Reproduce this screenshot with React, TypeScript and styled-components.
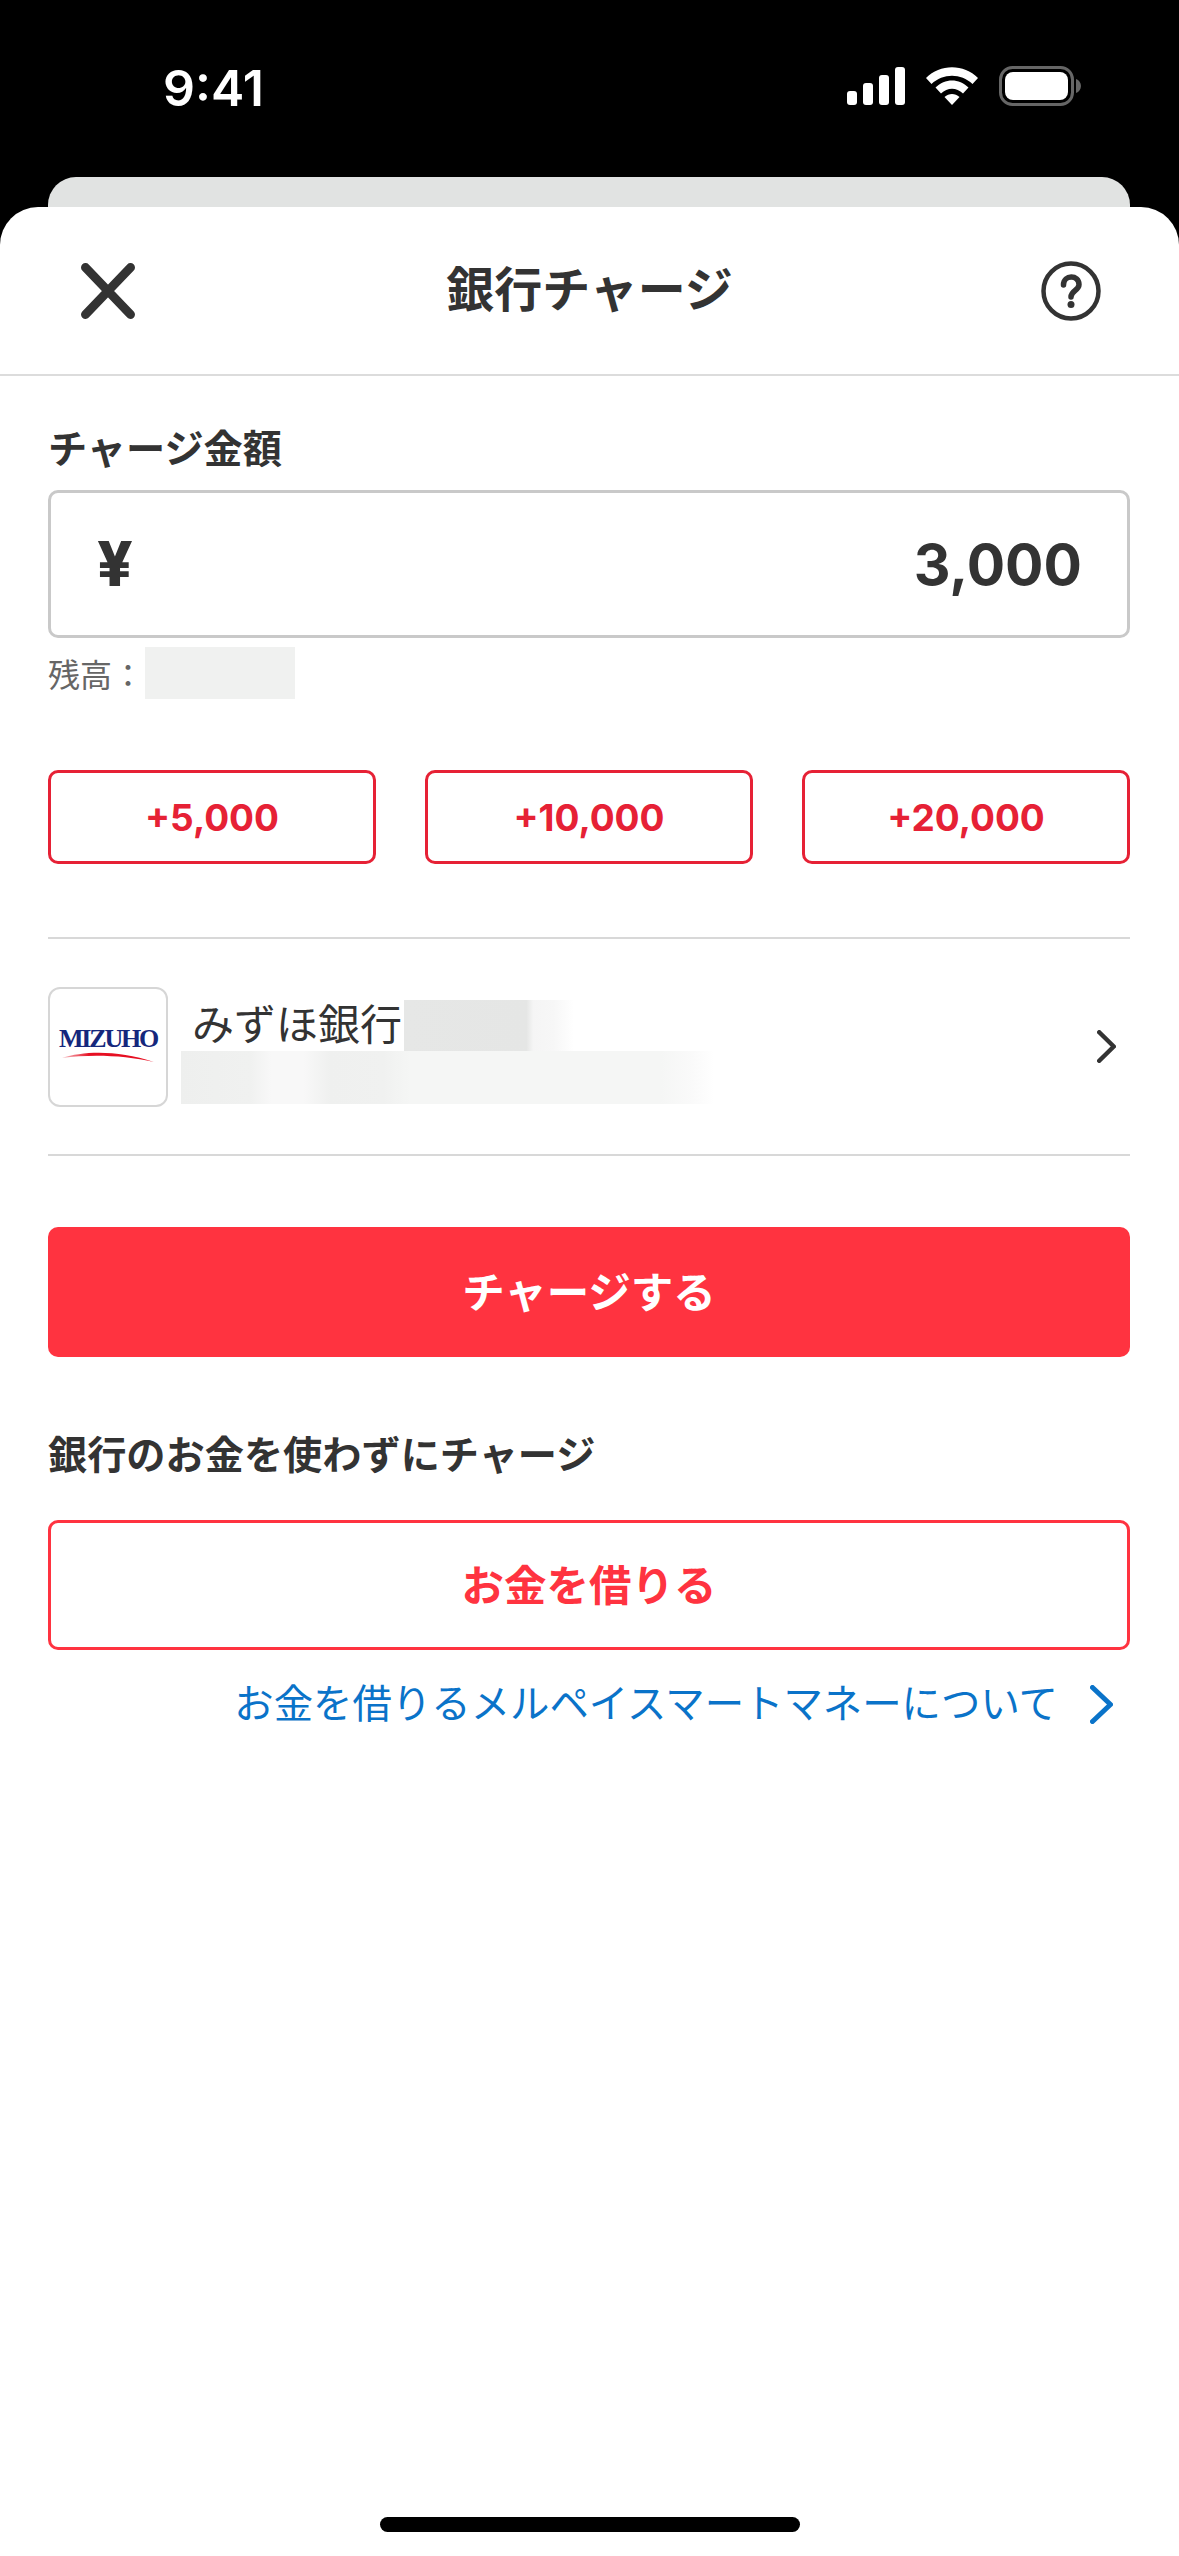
import React from "react";
import styled, { createGlobalStyle } from "styled-components";

const Global = createGlobalStyle`
  html, body { margin: 0; padding: 0; background: #000; }
  body { font-family: "Liberation Sans", "Noto Sans CJK JP", sans-serif; }
  * { box-sizing: border-box; }
`;

const Screen = styled.div`
  width: 1179px;
  height: 2556px;
  background: #000;
  display: flex;
  flex-direction: column;
  overflow: hidden;
`;

const StatusBar = styled.div`
  height: 177px;
  flex: none;
  display: flex;
  align-items: flex-start;
  justify-content: space-between;
  padding: 60px 98px 0 163px;
`;

const Time = styled.span`
  font-family: Inter, "Liberation Sans", sans-serif;
  font-size: 50px;
  line-height: 56px;
  font-weight: 600;
  color: #fff;
`;

const StatusIcons = styled.div`
  display: flex;
  align-items: center;
  gap: 21px;
  padding-top: 6px;
`;

const BackCard = styled.div`
  height: 30px;
  flex: none;
  margin: 0 49px 0 48px;
  background: #e1e3e2;
  border-radius: 28px 28px 0 0;
`;

const Sheet = styled.div`
  flex: 1;
  background: #fff;
  border-radius: 38px 38px 0 0;
  display: flex;
  flex-direction: column;
  position: relative;
`;

const Header = styled.header`
  height: 169px;
  flex: none;
  display: grid;
  grid-template-columns: 160px 1fr 160px;
  align-items: center;
  border-bottom: 2px solid #dcdcdc;
  color: #333;
`;

const Title = styled.h1`
  margin: 0;
  text-align: center;
  font-size: 48px;
  font-weight: 700;
  line-height: 60px;
  color: #333;
`;

const CloseBox = styled.div`
  padding-left: 81px;
  display: flex;
`;

const HelpBox = styled.div`
  display: flex;
  justify-content: flex-end;
  padding-right: 78px;
`;

const Content = styled.main`
  padding: 0 49px 0 48px;
  display: flex;
  flex-direction: column;
`;

const SectionLabel = styled.h2<{ $top: number }>`
  margin: ${(p) => p.$top}px 0 0;
  font-size: 39.200px;
  line-height: 46px;
  font-weight: 700;
  color: #333;
`;

const AmountBox = styled.div`
  margin-top: 17px;
  height: 148px;
  border: 3px solid #c9c9c9;
  border-radius: 10px;
  display: flex;
  align-items: center;
  justify-content: space-between;
  padding: 0 45px 0 46px;
  color: #333;
  font-family: Inter, "Liberation Sans", sans-serif;
  font-weight: 700;
`;

const Yen = styled.span`
  font-size: 62px;
  font-weight: 800;
  line-height: 1;
`;

const Amount = styled.span`
  font-size: 57px;
  line-height: 1;
`;

const BalanceRow = styled.div`
  margin-top: 9px;
  display: flex;
  align-items: center;
  height: 52px;
`;

const BalanceLabel = styled.span`
  font-size: 32px;
  color: #666;
  width: 97px;
`;

const Redaction = styled.div<{ $w: number; $h: number; $bg: string }>`
  width: ${(p) => p.$w}px;
  height: ${(p) => p.$h}px;
  flex: none;
  background: ${(p) => p.$bg};
`;

const QuickRow = styled.div`
  margin-top: 71px;
  display: grid;
  grid-template-columns: repeat(3, 328px);
  justify-content: space-between;
`;

const QuickButton = styled.button`
  height: 94px;
  background: #fff;
  border: 3px solid #e62135;
  border-radius: 10px;
  color: #e62135;
  font: 700 37px Inter, "Liberation Sans", sans-serif;
  padding: 0;
`;

const BankRow = styled.div`
  margin-top: 73px;
  height: 219px;
  border-top: 2px solid #d8d8d8;
  border-bottom: 2px solid #d8d8d8;
  display: flex;
  align-items: center;
  padding-right: 14px;
`;

const LogoTile = styled.div`
  width: 120px;
  height: 120px;
  flex: none;
  border: 2px solid #d6d6d6;
  border-radius: 12px;
  display: flex;
  flex-direction: column;
  align-items: center;
  justify-content: center;
  padding-bottom: 4px;
`;

const LogoWord = styled.span`
  font-family: "Liberation Serif", serif;
  font-weight: 700;
  font-size: 26px;
  line-height: 24px;
  color: #15277c;
  letter-spacing: -2.200px;
`;

const BankInfo = styled.div`
  flex: 1;
  margin: 11px 0 0 13px;
  display: flex;
  flex-direction: column;
`;

const BankTop = styled.div`
  display: flex;
  align-items: center;
  padding-left: 11px;
`;

const BankName = styled.span`
  font-size: 42px;
  line-height: 51px;
  color: #333;
  width: 212px;
`;

const PrimaryButton = styled.button`
  margin-top: 71px;
  height: 130px;
  background: #ff3340;
  border: none;
  border-radius: 10px;
  padding: 0 0 6px;
  color: #fff;
  font: 700 42.500px "Liberation Sans", "Noto Sans CJK JP", sans-serif;
`;

const OutlineButton = styled.button`
  margin-top: 41px;
  height: 130px;
  background: #fff;
  border: 3px solid #ff3340;
  border-radius: 10px;
  padding: 0 0 6px;
  color: #ff3340;
  font: 700 42.500px "Liberation Sans", "Noto Sans CJK JP", sans-serif;
`;

const InfoLink = styled.a`
  margin-top: 31px;
  display: flex;
  justify-content: flex-end;
  align-items: center;
  gap: 32px;
  padding-right: 17px;
  font-size: 39.400px;
  line-height: 46px;
  color: #0a73c9;
`;

const HomeIndicator = styled.div`
  position: absolute;
  left: 380px;
  bottom: 24px;
  width: 420px;
  height: 15px;
  border-radius: 8px;
  background: #000;
`;

const Signal = () => (
  <svg width="58" height="38" viewBox="0 0 58 38" fill="#fff">
    <rect x="0" y="24" width="10" height="14" rx="3" />
    <rect x="16" y="16" width="10" height="22" rx="3" />
    <rect x="32" y="8" width="10" height="30" rx="3" />
    <rect x="48" y="0" width="10" height="38" rx="3" />
  </svg>
);

const Wifi = () => (
  <svg width="52" height="38" viewBox="0 0 52 38" fill="#fff">
    <path d="M0 11 C14 -3.500 38 -3.500 52 11 L46.500 17 C35 6 17 6 5.500 17 Z" />
    <path d="M9.500 20.500 C19 11 33 11 42.500 20.500 L37 26.500 C30.500 20 21.500 20 15 26.500 Z" />
    <path d="M18.500 30 C23 26 29 26 33.500 30 L26 38 Z" />
  </svg>
);

const Battery = () => (
  <svg width="82" height="40" viewBox="0 0 82 40" fill="none">
    <rect x="1.500" y="1.500" width="72" height="37" rx="12" stroke="#666" strokeWidth="3" />
    <rect x="6" y="6" width="63" height="28" rx="8" fill="#fff" />
    <path d="M77 13 C80 14 82 17 82 20 C82 23 80 26 77 27 Z" fill="#666" />
  </svg>
);

const CloseIcon = () => (
  <svg width="54" height="56" viewBox="0 0 54 56" fill="none" stroke="#333" strokeWidth="9" strokeLinecap="round">
    <path d="M4.500 4.500 L49.500 51.500 M49.500 4.500 L4.500 51.500" />
  </svg>
);

const HelpIcon = () => (
  <svg width="60" height="60" viewBox="0 0 60 60" fill="none">
    <circle cx="30" cy="30" r="27.500" stroke="#333" strokeWidth="4.500" />
    <path d="M22.500 24 C22.500 13.500 38 13.500 38 23.500 C38 29.500 30 29.500 30 36" stroke="#333" strokeWidth="5.500" strokeLinecap="round" />
    <circle cx="30" cy="43.500" r="3.500" fill="#333" />
  </svg>
);

const Swoosh = () => (
  <svg width="92" height="12" viewBox="0 0 92 12">
    <defs>
      <linearGradient id="sw" x1="0" x2="1" y1="0" y2="0">
        <stop offset="0" stopColor="#f6c4c8" />
        <stop offset="0.3" stopColor="#e60f22" />
        <stop offset="1" stopColor="#e60f22" />
      </linearGradient>
    </defs>
    <path d="M0 7 C22 0 56 -1 92 11 C62 4 28 3 0 7 Z" fill="url(#sw)" />
  </svg>
);

const ChevronRight = ({ color, w, h, sw }: { color: string; w: number; h: number; sw: number }) => (
  <svg width={w} height={h} viewBox={`0 0 ${w} ${h}`} fill="none" stroke={color} strokeWidth={sw} strokeLinecap="round" strokeLinejoin="round">
    <path d={`M${sw / 2} ${sw / 2} L${w - sw / 2} ${h / 2} L${sw / 2} ${h - sw / 2}`} />
  </svg>
);

export default function App() {
  return (
    <Screen>
      <Global />
      <StatusBar>
        <Time>9:41</Time>
        <StatusIcons>
          <Signal />
          <Wifi />
          <Battery />
        </StatusIcons>
      </StatusBar>
      <BackCard />
      <Sheet>
        <Header>
          <CloseBox>
            <CloseIcon />
          </CloseBox>
          <Title>銀行チャージ</Title>
          <HelpBox>
            <HelpIcon />
          </HelpBox>
        </Header>
        <Content>
          <SectionLabel $top={51}>チャージ金額</SectionLabel>
          <AmountBox>
            <Yen>¥</Yen>
            <Amount>3,000</Amount>
          </AmountBox>
          <BalanceRow>
            <BalanceLabel>残高：</BalanceLabel>
            <Redaction $w={150} $h={52} $bg="#f0f1f0" />
          </BalanceRow>
          <QuickRow>
            <QuickButton>+5,000</QuickButton>
            <QuickButton>+10,000</QuickButton>
            <QuickButton>+20,000</QuickButton>
          </QuickRow>
          <BankRow>
            <LogoTile>
              <LogoWord>MIZUHO</LogoWord>
              <Swoosh />
            </LogoTile>
            <BankInfo>
              <BankTop>
                <BankName>みずほ銀行</BankName>
                <Redaction
                  $w={170}
                  $h={51}
                  $bg="linear-gradient(90deg, #e6e7e6 0%, #e5e6e5 72%, #f5f5f5 76%, #f7f7f7 88%, #fff 100%)"
                />
              </BankTop>
              <Redaction
                $w={533}
                $h={53}
                $bg="linear-gradient(90deg, #eeefee 0%, #f0f1f0 13%, #f8f8f8 17%, #f8f8f8 23%, #eff0ef 28%, #f0f1f0 38%, #f5f6f5 43%, #f5f6f5 90%, #fafafa 96%, #fff 100%)"
              />
            </BankInfo>
            <ChevronRight color="#333" w={19} h={33} sw={4.5} />
          </BankRow>
          <PrimaryButton>チャージする</PrimaryButton>
          <SectionLabel $top={76}>銀行のお金を使わずにチャージ</SectionLabel>
          <OutlineButton>お金を借りる</OutlineButton>
          <InfoLink>
            お金を借りるメルペイスマートマネーについて
            <ChevronRight color="#0a73c9" w={23} h={39} sw={5} />
          </InfoLink>
        </Content>
        <HomeIndicator />
      </Sheet>
    </Screen>
  );
}
